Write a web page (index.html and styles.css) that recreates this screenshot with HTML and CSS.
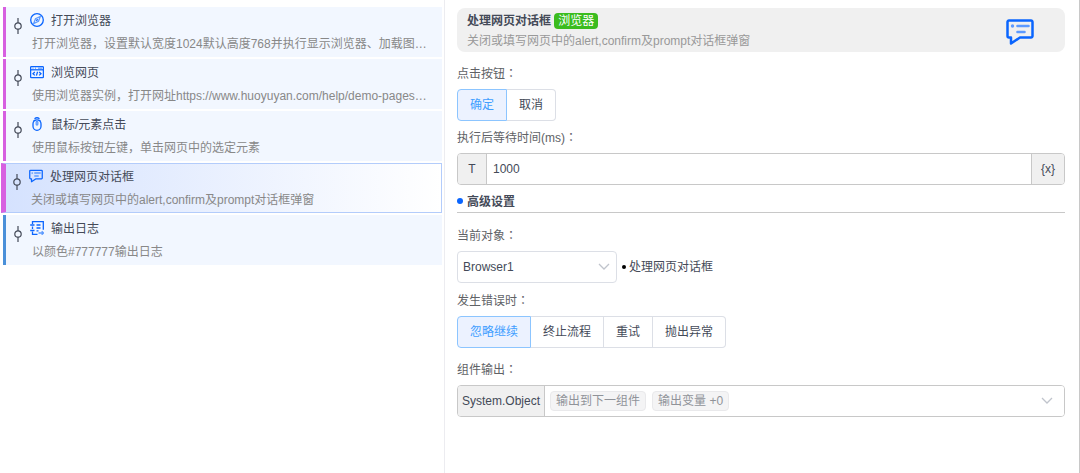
FILE: index.html
```html
<!DOCTYPE html>
<html lang="zh-CN">
<head>
  <meta charset="UTF-8" />
  <meta name="viewport" content="width=device-width, initial-scale=1.0"/>
  <title>处理网页对话框</title>
  <link rel="stylesheet" href="styles.css">
</head>
<body>

  <svg class="defs" width="0" height="0">
    <symbol id="node" viewBox="0 0 10 16">
      <path d="M5 0v5M5 11v5" />
      <circle cx="5" cy="8" r="3.200" />
    </symbol>
    <symbol id="chevron" viewBox="0 0 12 12">
      <path d="M1 3l5 5 5-5" />
    </symbol>
    <symbol id="dialog" viewBox="0 0 28 26">
      <path d="M3 1.500h22a1.500 1.500 0 0 1 1.500 1.500v14a1.500 1.500 0 0 1-1.500 1.500h-11l-9 6v-6h-2a1.500 1.500 0 0 1-1.500-1.500v-14a1.500 1.500 0 0 1 1.500-1.500z" fill="none" stroke="#0a65fe" stroke-width="2.500" stroke-linejoin="round" />
      <path d="M11.500 7h11M11.500 13h7" fill="none" stroke="#5c9aff" stroke-width="2.600" stroke-linecap="round" />
      <circle cx="6.500" cy="7" r="1.700" fill="#5c9aff" stroke="none" />
    </symbol>
  </svg>

  <div class="layout">
    <ul class="steps">
      <li class="step">
        <svg class="node"><use href="#node" /></svg>
        <div class="step-body">
          <div class="step-title">
            <svg class="icon" viewBox="0 0 14 14">
              <circle cx="7" cy="7" r="6.300" />
              <path class="soft" d="M10.300 3.500L8.500 8.300 3.700 10.500 5.500 5.700z" />
              <path d="M6.300 7.700l1.400-1.400" />
            </svg>
            打开浏览器
          </div>
          <div class="step-desc">打开浏览器，设置默认宽度1024默认高度768并执行显示浏览器、加载图片及脚本</div>
        </div>
      </li>
      <li class="step">
        <svg class="node"><use href="#node" /></svg>
        <div class="step-body">
          <div class="step-title">
            <svg class="icon" viewBox="0 0 14 14">
              <rect x="0.600" y="1.600" width="12.800" height="11" rx="0.800" />
              <path d="M0.600 4.800h12.800" />
              <path class="soft" d="M2.500 3.200h1M5 3.200h1M8 3.200h4" />
              <path d="M4.800 7L3 8.700l1.800 1.700M9.200 7L11 8.700l-1.800 1.700M7.600 6.800l-1.200 3.800" />
            </svg>
            浏览网页
          </div>
          <div class="step-desc">使用浏览器实例，打开网址https://www.huoyuyan.com/help/demo-pages/index.html</div>
        </div>
      </li>
      <li class="step">
        <svg class="node"><use href="#node" /></svg>
        <div class="step-body">
          <div class="step-title">
            <svg class="icon" viewBox="0 0 14 14">
              <path d="M4.500 1.700a3.200 2 0 0 1 5 0" />
              <rect x="3" y="2.800" width="8" height="10.500" rx="4" />
              <path d="M3.400 4.300L5.400 3M10.600 4.300L8.600 3" />
              <rect class="soft" x="6.200" y="4.300" width="1.600" height="3.800" rx="0.800" />
            </svg>
            鼠标/元素点击
          </div>
          <div class="step-desc">使用鼠标按钮左键，单击网页中的选定元素</div>
        </div>
      </li>
      <li class="step active">
        <svg class="node"><use href="#node" /></svg>
        <div class="step-body">
          <div class="step-title">
            <svg class="icon"><use href="#dialog" /></svg>
            处理网页对话框
          </div>
          <div class="step-desc">关闭或填写网页中的alert,confirm及prompt对话框弹窗</div>
        </div>
      </li>
      <li class="step log">
        <svg class="node"><use href="#node" /></svg>
        <div class="step-body">
          <div class="step-title">
            <svg class="icon" viewBox="0 0 14 14">
              <path d="M2.500 3V0.700h10.800v8.100M2.500 10.500v2.800h5" />
              <path d="M0.200 4h4.300M0.200 9.500h4.300M2.500 5.500v2.500" />
              <path d="M6.500 4h4M6.500 7h4M6.500 9.800h2" />
              <path class="soft" d="M8.500 12h5M11.700 10.200l1.800 1.800-1.800 1.800" />
            </svg>
            输出日志
          </div>
          <div class="step-desc">以颜色#777777输出日志</div>
        </div>
      </li>
    </ul>

    <form class="detail">
      <div class="header">
        <div class="header-text">
          <div class="header-title">处理网页对话框 <span class="badge">浏览器</span></div>
          <div class="header-desc">关闭或填写网页中的alert,confirm及prompt对话框弹窗</div>
        </div>
        <svg class="header-icon"><use href="#dialog" /></svg>
      </div>

      <fieldset class="field">
        <legend class="label">点击按钮<span class="colon" lang="zh-TW">：</span></legend>
        <div class="radio-group">
          <label><input type="radio" name="button" checked><span>确定</span></label>
          <label><input type="radio" name="button"><span>取消</span></label>
        </div>
      </fieldset>

      <div class="field">
        <label class="label" for="wait">执行后等待时间(ms)<span class="colon" lang="zh-TW">：</span></label>
        <div class="box">
          <button type="button" class="addon type">T</button>
          <input type="text" id="wait" class="box-input" value="1000">
          <button type="button" class="addon var">{x}</button>
        </div>
      </div>

      <h3 class="section">高级设置</h3>

      <div class="field">
        <label class="label" for="target">当前对象<span class="colon" lang="zh-TW">：</span></label>
        <div class="target">
          <div class="select">
            <select id="target">
              <option>Browser1</option>
            </select>
            <svg class="chevron"><use href="#chevron" /></svg>
          </div>
          <span class="target-name">处理网页对话框</span>
        </div>
      </div>

      <fieldset class="field on-error">
        <legend class="label">发生错误时<span class="colon" lang="zh-TW">：</span></legend>
        <div class="radio-group">
          <label><input type="radio" name="error" checked><span>忽略继续</span></label>
          <label><input type="radio" name="error"><span>终止流程</span></label>
          <label><input type="radio" name="error"><span>重试</span></label>
          <label><input type="radio" name="error"><span>抛出异常</span></label>
        </div>
      </fieldset>

      <div class="field output">
        <label class="label" for="output">组件输出<span class="colon" lang="zh-TW">：</span></label>
        <div class="box">
          <span class="addon object">System.Object</span>
          <button type="button" id="output" class="tags">
            <span class="tag">输出到下一组件</span>
            <span class="tag">输出变量 +0</span>
            <svg class="chevron"><use href="#chevron" /></svg>
          </button>
        </div>
      </div>
    </form>
  </div>

</body>
</html>
```

FILE: styles.css
```css
* {
  box-sizing: border-box;
}

body {
  margin: 0;
  background: #fff;
}

body, button, input, select {
  font-family: "Liberation Sans", "Noto Sans CJK SC", sans-serif;
  font-size: 12px;
  color: #444a58;
}

.defs {
  position: absolute;
}

.layout {
  display: flex;
  min-height: 100vh;
  border-right: 1px solid #c8c8c8;
}

/* step list */
.steps {
  flex: 0 0 445px;
  min-width: 0;
  margin: 0;
  padding: 7px 2px 0 3px;
  list-style: none;
  border-right: 1px solid #ececf0;
}

.step {
  display: flex;
  height: 50px;
  margin-bottom: 2px;
  padding: 3px 12px 0 7px;
  border-left: 3px solid #d760e0;
  background: #f2f7ff;
}

.step.log {
  border-left-color: #4a90d9;
}

.step.active {
  margin-left: -2px;
  padding: 2px 11px 0 6px;
  border: 1px solid #b3ccfb;
  border-left: 5px solid #d760e0;
  background: linear-gradient(to right, #d5e2fe, #fff);
}

.node {
  flex: none;
  width: 10px;
  height: 16px;
  margin-top: 8px;
  fill: none;
  stroke: #444a58;
  stroke-width: 1.2;
}

.step-body {
  flex: 1;
  min-width: 0;
  padding-left: 7px;
  line-height: 23px;
}

.step-title {
  display: flex;
  align-items: center;
  gap: 7px;
}

.icon {
  width: 14px;
  height: 14px;
  margin-bottom: 4px;
  fill: none;
  stroke: #0a65fe;
  stroke-width: 1.3;
}

.icon .soft {
  stroke: #5c9aff;
}

.step-desc {
  padding-left: 2px;
  color: #888;
  white-space: nowrap;
  overflow: hidden;
  text-overflow: ellipsis;
}

/* settings of the selected step */
.detail {
  flex: 1;
  min-width: 0;
  padding: 8px 14px 0 12px;
}

.header {
  display: flex;
  justify-content: space-between;
  align-items: center;
  height: 44px;
  padding: 0 30px 0 10px;
  border-radius: 8px;
  background: #f0f0f0;
  line-height: 20px;
}

.header-text {
  padding-top: 2px;
}

.header-title {
  font-weight: bold;
}

.badge {
  display: inline-block;
  padding: 0 4px;
  border-radius: 4px;
  background: #3bbc1f;
  color: #fff;
  line-height: 16px;
  font-weight: normal;
}

.header-desc {
  color: #999;
}

.header-icon {
  width: 30px;
  height: 26px;
  margin-top: 4px;
}

.field {
  margin: 0;
  padding: 0;
  border: none;
}

.label {
  display: block;
  height: 32px;
  padding: 0;
  line-height: 32px;
  color: #606266;
}

.header + .field {
  margin-top: 5px;
}

.colon {
  font-family: "Noto Sans CJK TC", sans-serif;
}

.radio-group {
  display: flex;
}

.radio-group input {
  position: absolute;
  opacity: 0;
}

.radio-group span {
  display: block;
  height: 32px;
  padding: 0 12px;
  border: 1px solid #dcdfe6;
  border-left: none;
  line-height: 31px;
  cursor: pointer;
}

.radio-group label:first-child span {
  border-left: 1px solid #dcdfe6;
  border-radius: 4px 0 0 4px;
}

.radio-group label:last-child span {
  border-radius: 0 4px 4px 0;
}

.radio-group label input:checked + span {
  border-color: #8cc5ff;
  background: #ecf2ff;
  color: #409eff;
}

.box {
  display: flex;
  height: 32px;
  border: 1px solid #c8c8c8;
  border-radius: 4px;
  overflow: hidden;
}

.addon {
  padding: 0;
  border: none;
  background: #f0f0f0;
  line-height: 30px;
  text-align: center;
}

.type {
  width: 29px;
  border-right: 1px solid #c8c8c8;
}

.var {
  width: 33px;
  border-left: 1px solid #c8c8c8;
}

.object {
  padding: 0 4px;
  border-right: 1px solid #c8c8c8;
}

.box-input {
  flex: 1;
  min-width: 0;
  padding: 0 6px;
  border: none;
  outline: none;
}

.section {
  display: flex;
  align-items: center;
  gap: 4px;
  height: 28px;
  margin: 0 0 6px;
  padding-top: 4px;
  border-bottom: 1px solid #c8c8c8;
  font-size: 12px;
}

.section::before {
  content: "";
  width: 6px;
  height: 6px;
  border-radius: 50%;
  background: #0a65fe;
}

.target {
  display: flex;
  align-items: center;
  gap: 5px;
}

.select {
  position: relative;
  width: 160px;
}

.select select {
  display: block;
  width: 100%;
  height: 32px;
  padding: 0 24px 0 5px;
  border: 1px solid #dcdfe6;
  border-radius: 4px;
  background: #fff;
  appearance: none;
}

.chevron {
  width: 12px;
  height: 12px;
  fill: none;
  stroke: #c0c4cc;
  stroke-width: 1.3;
}

.select .chevron {
  position: absolute;
  top: 10px;
  right: 7px;
  pointer-events: none;
}

.target-name {
  display: flex;
  align-items: center;
  gap: 3px;
  padding-bottom: 4px;
}

.target-name::before {
  content: "";
  width: 4px;
  height: 4px;
  margin-top: 4px;
  border-radius: 50%;
  background: #000;
}

.on-error {
  margin-top: 1px;
}

.output {
  margin-top: 5px;
}

.tags {
  display: flex;
  flex: 1;
  align-items: center;
  gap: 6px;
  min-width: 0;
  padding: 0 11px 0 5px;
  border: none;
  background: #fff;
}

.tags .chevron {
  margin-left: auto;
}

.tag {
  height: 20px;
  padding: 0 5px;
  border: 1px solid #e9e9eb;
  border-radius: 4px;
  background: #f4f4f5;
  color: #909399;
  line-height: 18px;
}
```
